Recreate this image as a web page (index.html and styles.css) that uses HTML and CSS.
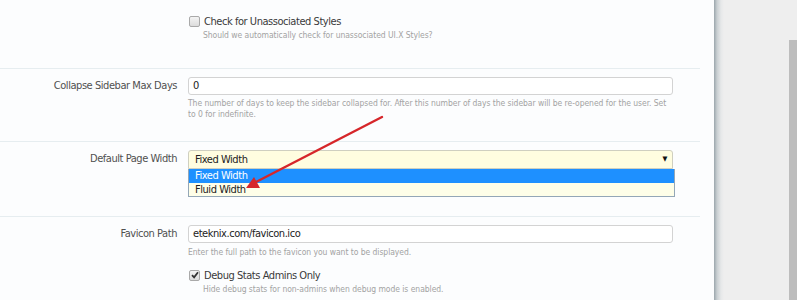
FILE: index.html
```html
<html lang="en">
<head>
  <meta charset="UTF-8">
  <title>Options</title>
  <link rel="stylesheet" href="styles.css">
</head>
<body>

  <div class="page">
    <div class="panel">

      <!-- linha 1: checkbox -->
      <div class="row row-first">
        <div class="label"></div>
        <div class="control">
          <label class="check"><span class="box"></span>Check for Unassociated Styles</label>
          <p class="hint hint-check">Should we automatically check for unassociated UI.X Styles?</p>
        </div>
      </div>

      <div class="row row-days">
        <div class="label">Collapse Sidebar Max Days</div>
        <div class="control">
          <div class="input">0</div>
          <p class="hint hint-days">The number of days to keep the sidebar collapsed for. After this number of days the sidebar will be re-opened for the user. Set to 0 for indefinite.</p>
        </div>
      </div>

      <div class="row row-width">
        <div class="label">Default Page Width</div>
        <div class="control">
          <div class="select">Fixed Width<span class="caret">&#9660;</span></div>
          <ul class="options">
            <li class="selected">Fixed Width</li>
            <li>Fluid Width</li>
          </ul>
        </div>
      </div>

      <div class="row row-favicon">
        <div class="label">Favicon Path</div>
        <div class="control">
          <div class="input">eteknix.com/favicon.ico</div>
          <p class="hint hint-path">Enter the full path to the favicon you want to be displayed.</p>
          <label class="check"><span class="box checked"><svg width="8" height="8" viewBox="0 0 8 8"><path d="M1 4.2 L3.1 6.3 L7 1.3" fill="none" stroke="#333" stroke-width="1.8"/></svg></span>Debug Stats Admins Only</label>
          <p class="hint hint-check">Hide debug stats for non-admins when debug mode is enabled.</p>
        </div>
      </div>

      <!-- seta vermelha por cima -->
      <svg class="arrow" width="400" height="200" viewBox="0 0 400 200">
        <line x1="382" y1="117" x2="256" y2="182" stroke="#d6262a" stroke-width="2.4" stroke-linecap="round"/>
        <polygon points="246,188 254,177 260,188" fill="#d6262a"/>
      </svg>
    </div>
    <div class="side">
      <div class="scroll"></div>
    </div>
  </div>

</body>
</html>
```

FILE: styles.css
```css
body {
  margin: 0;
  height: 300px;
  overflow: hidden;
  background: #eeeeee;
  font-family: "DejaVu Sans Condensed", "DejaVu Sans", sans-serif;
  font-stretch: condensed;
  font-size: 11px;
  letter-spacing: -0.45px;
  color: #4a4a4a;
}

.page {
  display: flex;
  height: 300px;
}

.panel {
  position: relative;
  width: 714px;
  padding-right: 14px;
  box-sizing: border-box;
  background: #fcfdfe;
}

.side {
  flex: 1;
  display: flex;
  justify-content: flex-end;
  padding-top: 40px;
  background: linear-gradient(to right, #9ba6ac 0, #c9cfd2 3px, #e6e8e9 7px, #eeeeee 10px);
}

.scroll {
  width: 8px;
  background: #bdbdbd;
}

/* linhas do formulario */
.row {
  display: flex;
  gap: 11px;
  border-bottom: 1px solid #e6edf0;
}

.label {
  width: 177px;
  flex-shrink: 0;
  text-align: right;
  line-height: 18px;
  color: #505050;
}

.control {
  width: 485px;
}

.row-first {
  padding-top: 14px;
  height: 54px;
}

.row-days {
  padding-top: 8px;
  height: 64px;
}

.row-width {
  padding-top: 8px;
  height: 66px;
}

.row-favicon {
  padding-top: 8px;
  border-bottom: none;
}

.check {
  display: flex;
  align-items: center;
  height: 14px;
  color: #3a3a3a;
}

.box {
  width: 9px;
  height: 9px;
  margin: 0 4px 0 1px;
  border: 1px solid #a9a9a9;
  border-radius: 2px;
  background: linear-gradient(#f4f4f4, #dcdcdc);
  display: flex;
  align-items: center;
  justify-content: center;
}

.hint {
  margin: 2px 0 0;
  font-size: 8.5px;
  letter-spacing: -0.05px;
  line-height: 11px;
  color: #a3a3a3;
}

.hint-days {
  margin-top: 3px;
  max-width: 480px;
}

.hint-check {
  margin: 2px 0 0 15px;
}

.hint-path {
  margin: 4px 0 10px;
}

.input {
  height: 16px;
  line-height: 16px;
  padding: 0 4px;
  border: 1px solid #d3d3d3;
  border-radius: 3px;
  background: #ffffff;
  color: #222222;
}

.select {
  display: flex;
  justify-content: space-between;
  height: 17px;
  line-height: 17px;
  padding: 0 5px 0 6px;
  border: 1px solid #cfcfc0;
  border-radius: 3px 3px 0 0;
  background: #fffde0;
  color: #222222;
}

.caret {
  font-size: 7px;
  color: #111111;
}

.options {
  list-style: none;
  margin: 0;
  width: 485px;
  padding: 0;
  border: 1px solid #94a7b7;
  border-top: none;
  background: #fefee8;
  color: #222222;
}

.options li {
  height: 13px;
  line-height: 13px;
  padding-left: 6px;
}

.options .selected {
  height: 14px;
  background: #1e90ff;
  color: #ffffff;
}

.arrow {
  position: absolute;
  top: 0;
  left: 0;
}
```
